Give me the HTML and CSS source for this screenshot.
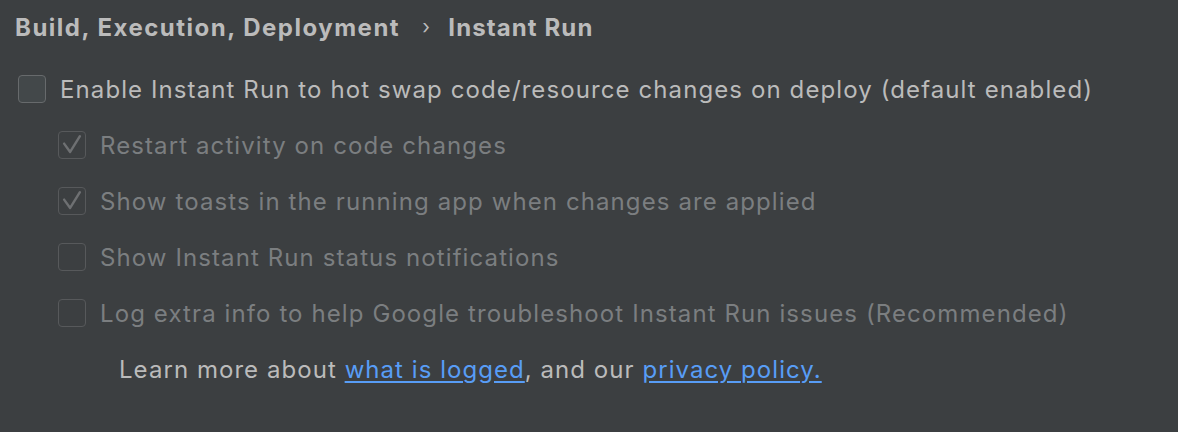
FILE: index.html
```html
<!DOCTYPE html>
<html>
<head>
<meta charset="utf-8">
<link rel="stylesheet" href="styles.css">
</head>
<body>
<div class="page">
  <div class="crumbs">
    <span class="crumb">Build, Execution, Deployment</span>
    <span class="sep">›</span>
    <span class="crumb">Instant Run</span>
  </div>
  <div class="row main">
    <span class="box"></span>
    <span class="label">Enable Instant Run to hot swap code/resource changes on deploy (default enabled)</span>
  </div>
  <div class="sub">
    <div class="row dis">
      <span class="box checked"><svg viewBox="0 0 28 28" width="28" height="28"><path d="M5.5 12.5 L12 21.5 L22.5 4.5" fill="none" stroke="#6e7072" stroke-width="2.6" stroke-linecap="round" stroke-linejoin="round"/></svg></span>
      <span class="label">Restart activity on code changes</span>
    </div>
    <div class="row dis">
      <span class="box checked"><svg viewBox="0 0 28 28" width="28" height="28"><path d="M5.5 12.5 L12 21.5 L22.5 4.5" fill="none" stroke="#6e7072" stroke-width="2.6" stroke-linecap="round" stroke-linejoin="round"/></svg></span>
      <span class="label">Show toasts in the running app when changes are applied</span>
    </div>
    <div class="row dis">
      <span class="box"></span>
      <span class="label">Show Instant Run status notifications</span>
    </div>
    <div class="row dis">
      <span class="box"></span>
      <span class="label">Log extra info to help Google troubleshoot Instant Run issues (Recommended)</span>
    </div>
    <div class="learn">Learn more about <a href="#">what is logged</a>, and our <a href="#">privacy policy.</a></div>
  </div>
</div>
</body>
</html>
```
FILE: styles.css
```css
html, body {
  margin: 0;
  padding: 0;
  background: #3c3f41;
}
body {
  width: 1178px;
  height: 432px;
  overflow: hidden;
  font-family: Inter, "Noto Sans", sans-serif;
  color: #bbbbbb;
}
.page {
  padding: 10px 0 0 15px;
}
.crumbs {
  display: flex;
  align-items: center;
  height: 34px;
  font-size: 24px;
  font-weight: 700;
  color: #bbbbbb;
  letter-spacing: 1.5px;
}
.sep {
  font-weight: 400;
  margin: 0 17px 0 22px;
  font-size: 20px;
}
.crumb + .sep + .crumb {
  letter-spacing: 1.1px;
}
.row {
  display: flex;
  align-items: center;
  height: 56px;
  font-size: 24px;
  letter-spacing: 1.1px;
}
.main {
  margin-top: 28px;
  padding-left: 3px;
  height: 34px;
}
.box {
  width: 26px;
  height: 26px;
  border: 1.5px solid #57595b;
  border-radius: 4px;
  flex: none;
  display: flex;
  align-items: center;
  justify-content: center;
  margin-right: 14px;
}
.main .box {
  background: #43484a;
  border-color: #676a6c;
}
.main .label {
  color: #bbbbbb;
}
.sub {
  padding-left: 43px;
  margin-top: 11px;
}
.dis .label {
  color: #7b7e80;
}
.box svg {
  display: block;
}
.learn {
  font-size: 24px;
  letter-spacing: 1.05px;
  padding-left: 61px;
  margin-top: 13px;
  line-height: 32px;
  color: #bbbbbb;
}
.learn a {
  color: #589df6;
  text-decoration: underline;
  text-underline-offset: 3px;
}
```
